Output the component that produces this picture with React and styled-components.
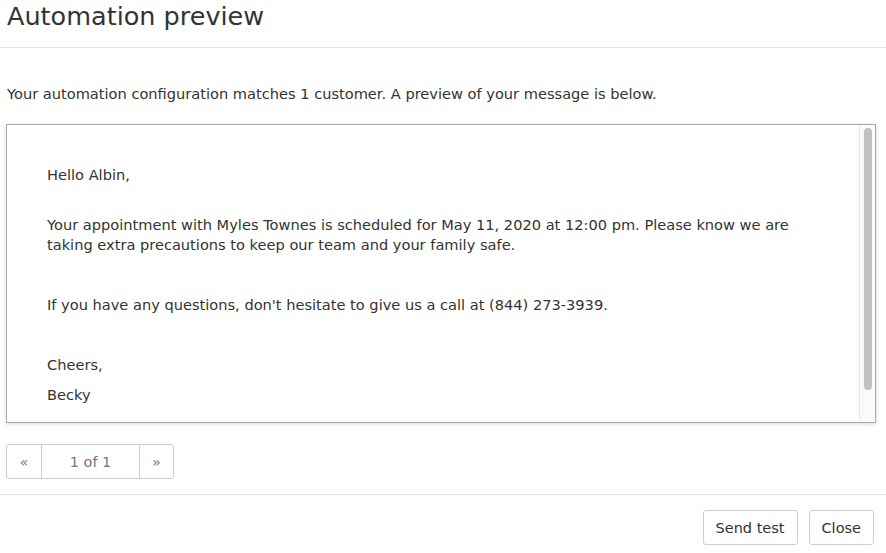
import React from "react";
import styled, { createGlobalStyle } from "styled-components";

const Global = createGlobalStyle`
  html, body { margin: 0; padding: 0; background: #fff; }
  body { font-family: "DejaVu Sans", "Noto Sans", sans-serif; color: #333; }
`;

const Page = styled.div`
  width: 886px;
  height: 553px;
  display: flex;
  flex-direction: column;
  overflow: hidden;
`;

const Header = styled.div`
  height: 48px;
  border-bottom: 1px solid #e6e6e6;
  padding: 0 7px;
  box-sizing: border-box;
`;

const Title = styled.h1`
  margin: 0;
  font-size: 25.5px;
  font-weight: 500;
  line-height: 32px;
  color: #333;
`;

const Body = styled.div`
  padding: 0 10px 0 6px;
`;

const Intro = styled.p`
  margin: 37px 0 0 1px;
  font-size: 14.6px;
  line-height: 18px;
`;

const Preview = styled.div`
  margin-top: 21px;
  height: 299px;
  box-sizing: border-box;
  border: 1px solid #a9a9a9;
  box-shadow: 0 1px 4px rgba(120, 140, 180, 0.35);
  display: flex;
  overflow: hidden;
`;

const Letter = styled.div`
  flex: 1;
  padding: 40px 40px 0 40px;
  font-size: 14.6px;
  line-height: 20px;
`;

const Line = styled.div`
  margin-bottom: ${(p) => p.$gap || 0}px;
`;

const ScrollTrack = styled.div`
  width: 16px;
  flex-shrink: 0;
  background: #fafafa;
  border-left: 1px solid #e8e8e8;
  box-sizing: border-box;
  padding: 3px 3px 0 4px;
`;

const ScrollThumb = styled.div`
  height: 262px;
  border-radius: 5px;
  background: #c1c1c1;
`;

const Pager = styled.div`
  margin-top: 21px;
  display: inline-flex;
  height: 35px;
  border: 1px solid #c9cdd6;
  border-radius: 3px;
  box-sizing: border-box;
  color: #777;
  font-size: 14.5px;
`;

const PagerCell = styled.div`
  display: flex;
  align-items: center;
  justify-content: center;
  width: ${(p) => p.$w}px;
  border-left: ${(p) => (p.$first ? "none" : "1px solid #c9cdd6")};
`;

const Footer = styled.div`
  margin-top: 15px;
  border-top: 1px solid #e6e6e6;
  display: flex;
  justify-content: flex-end;
  gap: 11px;
  padding: 15px 12px 0 0;
`;

const Button = styled.button`
  height: 35px;
  padding: 0 ${(p) => p.$px || 12}px;
  background: #fff;
  border: 1px solid #cfcfcf;
  border-radius: 3px;
  font-family: inherit;
  font-size: 14.5px;
  color: #333;
`;

export default function App() {
  return (
    <Page>
      <Global />
      <Header>
        <Title>Automation preview</Title>
      </Header>
      <Body>
        <Intro>
          Your automation configuration matches 1 customer. A preview of your message is below.
        </Intro>
        <Preview>
          <Letter>
            <Line $gap={30}>Hello Albin,</Line>
            <Line $gap={40}>
              Your appointment with Myles Townes is scheduled for May 11, 2020 at 12:00 pm. Please know we are taking extra precautions to keep our team and your family safe.
            </Line>
            <Line $gap={40}>
              If you have any questions, don't hesitate to give us a call at (844) 273-3939.
            </Line>
            <Line $gap={10}>Cheers,</Line>
            <Line>Becky</Line>
          </Letter>
          <ScrollTrack>
            <ScrollThumb />
          </ScrollTrack>
        </Preview>
        <Pager>
          <PagerCell $w={34} $first>«</PagerCell>
          <PagerCell $w={97}>1 of 1</PagerCell>
          <PagerCell $w={33}>»</PagerCell>
        </Pager>
      </Body>
      <Footer>
        <Button $px={12}>Send test</Button>
        <Button $px={12}>Close</Button>
      </Footer>
    </Page>
  );
}
